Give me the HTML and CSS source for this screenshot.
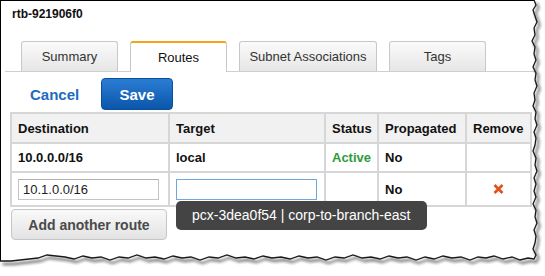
FILE: index.html
```html
<!DOCTYPE html>
<html lang="en">
<head>
  <meta charset="UTF-8">
  <title>rtb-921906f0 - Routes</title>
  <link rel="stylesheet" href="styles.css">
</head>
<body>
  <div class="sheet">
    <div class="title">rtb-921906f0</div>

    <div class="tabs">
      <div class="tab">Summary</div>
      <div class="tab active">Routes</div>
      <div class="tab tab-wide">Subnet Associations</div>
      <div class="tab">Tags</div>
    </div>

    <div class="actions">
      <a class="cancel" href="#">Cancel</a>
      <button class="btn-save">Save</button>
    </div>

    <table class="routes">
      <colgroup>
        <col class="c-dest">
        <col class="c-target">
        <col class="c-status">
        <col class="c-prop">
        <col class="c-remove">
      </colgroup>
      <thead>
        <tr>
          <th>Destination</th>
          <th>Target</th>
          <th>Status</th>
          <th>Propagated</th>
          <th>Remove</th>
        </tr>
      </thead>
      <tbody>
        <tr class="row-local">
          <td class="strong">10.0.0.0/16</td>
          <td class="strong">local</td>
          <td class="strong active-status">Active</td>
          <td class="strong">No</td>
          <td></td>
        </tr>
        <tr class="row-edit">
          <td><input class="field" type="text" value="10.1.0.0/16"></td>
          <td>
            <div class="target-wrap">
              <input class="field focused" type="text" value="">
              <div class="tooltip">pcx-3dea0f54 | corp-to-branch-east</div>
            </div>
          </td>
          <td></td>
          <td class="strong">No</td>
          <td class="remove">
            <svg width="11" height="10" viewBox="0 0 11 10">
              <path d="M1.5 1 L9.5 9 M9.5 1 L1.5 9" stroke="#e2501c" stroke-width="2.6" stroke-linecap="butt"/>
            </svg>
          </td>
        </tr>
      </tbody>
    </table>

    <button class="btn-add">Add another route</button>
  </div>

  <!-- torn paper edge -->
  <svg class="torn" width="545" height="276" viewBox="0 0 545 276">
    <defs>
      <filter id="soft" x="-10%" y="-10%" width="120%" height="120%">
        <feGaussianBlur stdDeviation="1.4"/>
      </filter>
    </defs>
    <path fill="#fff" d="M534 0 L536 5 L533 10 L535 16 L537 22 L534 28 L535 35 L532 41 L535 47 L534 54 L536 60 L533 67 L536 73 L535 80 L537 86 L534 93 L535 100 L533 106 L536 112 L535 119 L537 125 L534 132 L536 138 L535 145 L533 151 L536 158 L535 165 L537 171 L534 178 L536 184 L534 191 L536 197 L533 204 L536 210 L535 217 L537 223 L534 230 L536 236 L535 243 L533 249 L536 255 L534 259 L528 258 L520 260 L512 257 L503 259 L494 256 L486 258 L478 257 L470 260 L461 257 L452 258 L443 256 L434 259 L425 257 L416 260 L407 257 L398 258 L389 256 L380 259 L371 257 L362 258 L353 255 L344 258 L335 257 L326 260 L317 257 L308 258 L299 256 L290 259 L281 257 L272 258 L263 256 L254 259 L245 257 L236 258 L227 255 L218 258 L209 257 L200 260 L191 257 L182 258 L173 256 L164 259 L155 257 L146 258 L137 255 L128 258 L119 257 L110 260 L101 257 L92 258 L83 256 L74 259 L65 257 L56 256 L47 255 L38 258 L29 259 L20 260 L11 261 L0 261 L0 276 L545 276 L545 0 Z"/>
    <g transform="translate(2.5 3)" filter="url(#soft)">
      <use href="#edge" stroke="#7a7a7a" stroke-width="3"/>
    </g>
    <path id="edge" fill="none" stroke="#1a1a1a" stroke-width="1.3" d="M534 0 L536 5 L533 10 L535 16 L537 22 L534 28 L535 35 L532 41 L535 47 L534 54 L536 60 L533 67 L536 73 L535 80 L537 86 L534 93 L535 100 L533 106 L536 112 L535 119 L537 125 L534 132 L536 138 L535 145 L533 151 L536 158 L535 165 L537 171 L534 178 L536 184 L534 191 L536 197 L533 204 L536 210 L535 217 L537 223 L534 230 L536 236 L535 243 L533 249 L536 255 L534 259 L528 258 L520 260 L512 257 L503 259 L494 256 L486 258 L478 257 L470 260 L461 257 L452 258 L443 256 L434 259 L425 257 L416 260 L407 257 L398 258 L389 256 L380 259 L371 257 L362 258 L353 255 L344 258 L335 257 L326 260 L317 257 L308 258 L299 256 L290 259 L281 257 L272 258 L263 256 L254 259 L245 257 L236 258 L227 255 L218 258 L209 257 L200 260 L191 257 L182 258 L173 256 L164 259 L155 257 L146 258 L137 255 L128 258 L119 257 L110 260 L101 257 L92 258 L83 256 L74 259 L65 257 L56 256 L47 255 L38 258 L29 259 L20 260 L11 261 L0 261"/>
  </svg>
</body>
</html>
```

FILE: styles.css
```css
body {
  margin: 0;
  padding: 0;
  background: #fff;
  font-family: 'Liberation Sans', Arial, sans-serif;
  color: #222;
  overflow: hidden;
}
.sheet {
  box-sizing: border-box;
  width: 545px;
  height: 262px;
  border-top: 1px solid #000;
  border-left: 1px solid #000;
  padding-top: 6px;
}
.title {
  font-size: 12px;
  line-height: 14px;
  font-weight: bold;
  color: #111;
  padding-left: 11px;
}
.tabs {
  display: flex;
  align-items: flex-end;
  gap: 12px;
  height: 30px;
  margin: 20px 0 0 4px;
  padding-left: 16px;
  border-bottom: 1px solid #cfcfcf;
}
.tab {
  box-sizing: border-box;
  width: 97px;
  height: 30px;
  border: 1px solid #c8c8c8;
  border-bottom: none;
  border-radius: 3px 3px 0 0;
  background: linear-gradient(#fafafa, #e6e6e6);
  font-size: 13px;
  line-height: 29px;
  text-align: center;
  color: #333;
}
.tab-wide {
  width: 138px;
}
.tab.active {
  position: relative;
  height: 31px;
  margin-bottom: -1px;
  background: #fff;
  border-top: 2px solid #f7a21b;
  color: #111;
  line-height: 30px;
}
.actions {
  display: flex;
  align-items: center;
  margin-top: 6px;
  padding-left: 29px;
}
.cancel {
  width: 71px;
  font-size: 15px;
  font-weight: bold;
  color: #1d6cc2;
  text-decoration: none;
}
.btn-save {
  width: 72px;
  height: 32px;
  border: 1px solid #0a4f9c;
  border-radius: 4px;
  background: linear-gradient(#2b7dd4, #0a56aa);
  color: #fff;
  font-family: 'Liberation Sans', Arial, sans-serif;
  font-size: 15px;
  font-weight: bold;
  padding: 0;
}
.routes {
  table-layout: fixed;
  width: 520px;
  margin: 2px 0 0 9px;
  border-collapse: collapse;
  border: 2px solid #d6d6d6;
  font-size: 13px;
}
.c-dest { width: 158px; }
.c-target { width: 156px; }
.c-status { width: 53px; }
.c-prop { width: 88px; }
.c-remove { width: 65px; }
.routes th,
.routes td {
  border: 2px solid #d6d6d6;
  padding: 0 6px;
  text-align: left;
  vertical-align: middle;
  color: #111;
}
.routes th {
  height: 28px;
  background: #f1f1f1;
  font-weight: bold;
}
.row-local td {
  height: 27px;
}
.row-edit td {
  height: 32px;
}
.strong {
  font-weight: bold;
}
.active-status {
  color: #2f9a3c !important;
}
.target-wrap {
  position: relative;
}
.field {
  box-sizing: border-box;
  display: block;
  width: 141px;
  height: 21px;
  margin: 0;
  padding: 0 4px;
  border: 1px solid #c4c4c4;
  border-top-color: #b0b0b0;
  font-family: 'Liberation Sans', Arial, sans-serif;
  font-size: 13px;
  color: #222;
  outline: none;
}
.field.focused {
  border-color: #6fa8dc;
}
.remove {
  text-align: center !important;
  line-height: 0;
}
.tooltip {
  position: absolute;
  top: 22px;
  left: 0;
  z-index: 5;
  height: 29px;
  padding: 0 17px 0 16px;
  border-radius: 5px;
  background: #444;
  color: #fff;
  font-size: 14px;
  line-height: 29px;
  white-space: nowrap;
}
.btn-add {
  display: block;
  width: 156px;
  height: 31px;
  margin: 2px 0 0 10px;
  padding: 0;
  border: 1px solid #c6c6c6;
  border-radius: 4px;
  background: linear-gradient(#f9f9f9, #e3e3e3);
  font-family: 'Liberation Sans', Arial, sans-serif;
  font-size: 14px;
  font-weight: bold;
  color: #4a4a4a;
}
.torn {
  position: absolute;
  top: 0;
  left: 0;
  pointer-events: none;
  z-index: 10;
}
```
